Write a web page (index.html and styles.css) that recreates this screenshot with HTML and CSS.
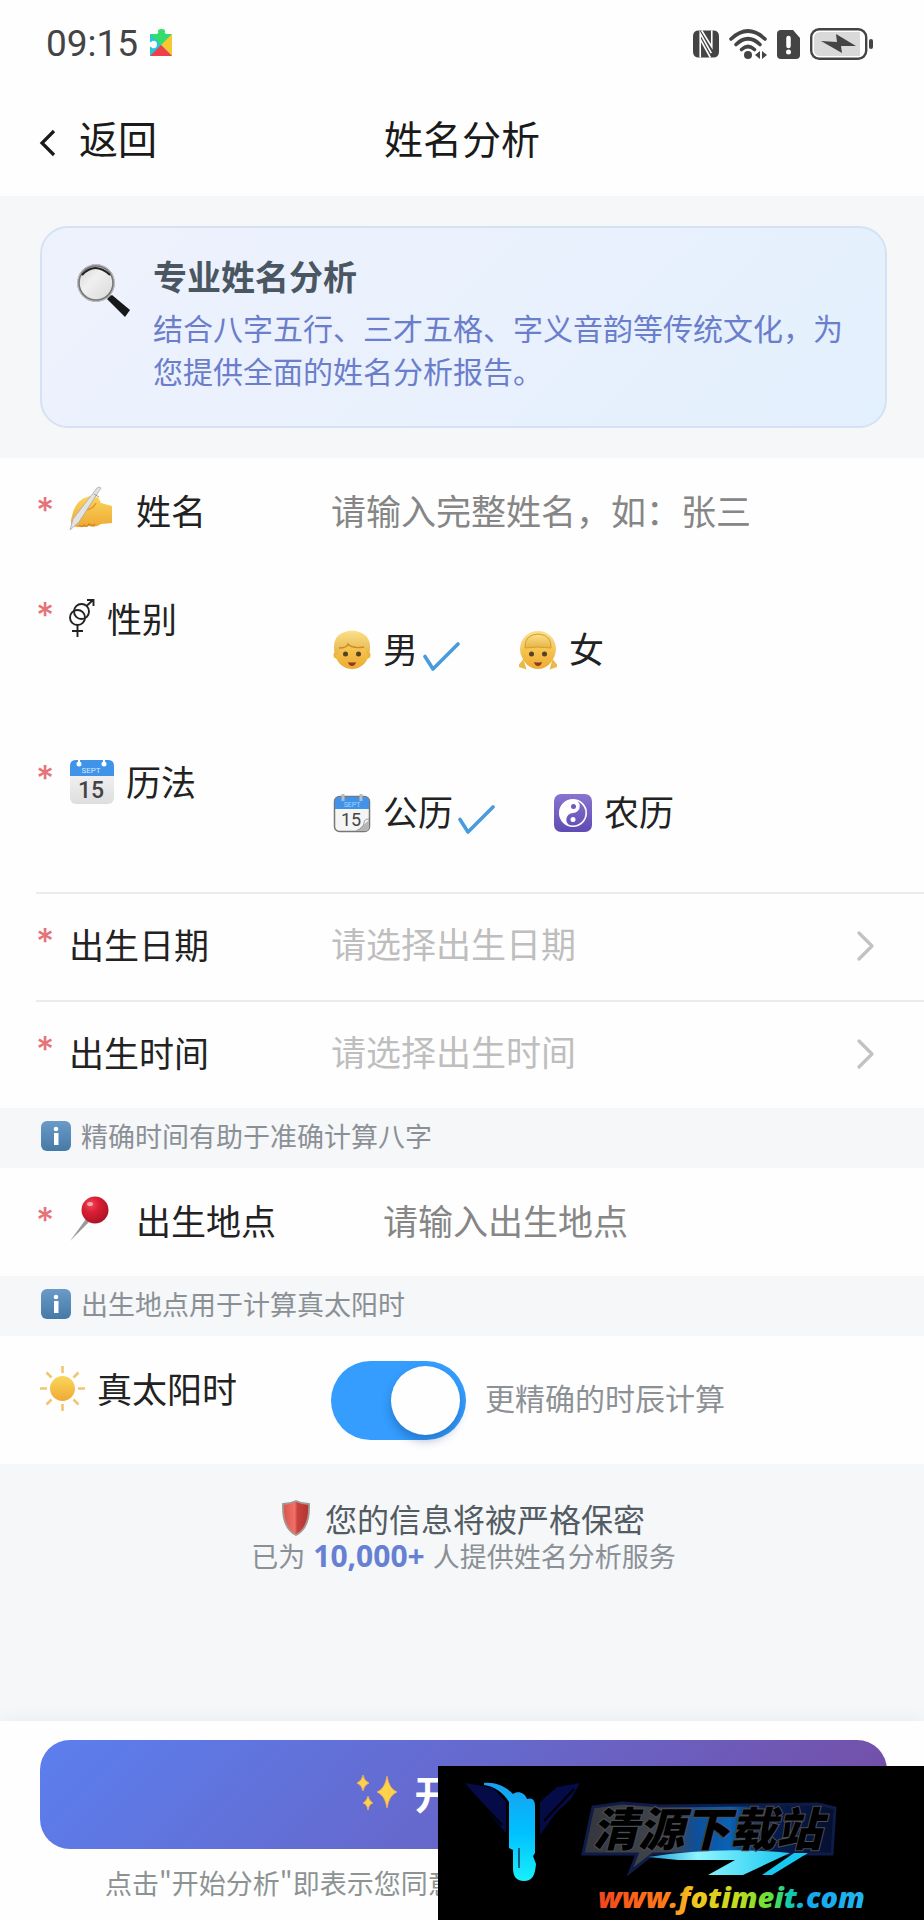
FILE: index.html
```html
<!DOCTYPE html>
<html lang="zh-CN">
<head>
<meta charset="utf-8">
<meta name="viewport" content="width=device-width, initial-scale=1">
<title>姓名分析</title>
<link rel="stylesheet" href="styles.css">
</head>
<body>
<svg class="defs" width="0" height="0" aria-hidden="true">
  <defs>
    <linearGradient id="skin" x1="0" y1="0" x2="0" y2="1"><stop offset="0" stop-color="#fbd65c"/><stop offset="1" stop-color="#eeaa35"/></linearGradient>
    <linearGradient id="hair" x1="0" y1="0" x2="0" y2="1"><stop offset="0" stop-color="#fbe08a"/><stop offset="1" stop-color="#e6b445"/></linearGradient>
    <linearGradient id="paper" x1="0" y1="0" x2="0" y2="1"><stop offset="0" stop-color="#fafafa"/><stop offset="1" stop-color="#dedede"/></linearGradient>
    <linearGradient id="info" x1="0" y1="0" x2="0" y2="1"><stop offset="0" stop-color="#6a9bc9"/><stop offset="1" stop-color="#4579a6"/></linearGradient>
    <symbol id="i-info" viewBox="0 0 30 30">
      <rect width="30" height="30" rx="6" fill="url(#info)"/>
      <circle cx="15" cy="8" r="2.300" fill="#fff"/>
      <path d="M13 12h4.500v12H13z" fill="#fff"/>
    </symbol>
    <symbol id="i-check" viewBox="0 0 38 30">
      <path d="M2 14.500 10 27 35 2" fill="none" stroke="#4a9bdc" stroke-width="3.600" stroke-linecap="round" stroke-linejoin="round"/>
    </symbol>
    <symbol id="i-next" viewBox="0 0 18 30">
      <path d="M2 2 15 15 2 28" fill="none" stroke="#c2c2c2" stroke-width="3.200" stroke-linecap="round" stroke-linejoin="round"/>
    </symbol>
  </defs>
</svg>

<div class="status">
  <span class="status-time">09:15</span>
  <svg class="status-app" viewBox="0 0 24 28" aria-hidden="true">
    <path d="M1 5h22v22H1z" fill="#27c4de"/>
    <path d="M1 5h7q2-1 1-3 0-2 3.500-2T16 2q-1 2 1 3h6L12 16z" fill="#34dc6c"/>
    <path d="M23 5v22L12 16z" fill="#f9c72f"/>
    <path d="M12 16 23 27H1z" fill="#ee3f4b"/>
    <path d="M0 13q2 1 3-1 5-1 5 3.500T3 19q-1-2-3-1z" fill="#fff"/>
  </svg>
  <div class="status-icons">
    <svg width="26" height="28" viewBox="0 0 27 28" aria-hidden="true">
      <path d="M6 0h15q6 0 6 6v16q0 6-6 6H6q-6 0-6-6V6q0-6 6-6z" fill="#444"/>
      <path d="M7.500 28V3L19 23.500M9 0 19.500 17V0M7.500 9 18 28" stroke="#fff" stroke-width="1.700" fill="none"/>
    </svg>
    <svg width="38" height="30" viewBox="0 0 38 30" aria-hidden="true">
      <g fill="none" stroke="#444" stroke-width="3.600" stroke-linecap="round"><path d="M2 10Q19-6 36 10"/><path d="M7 15.500Q19 4 31 15.500"/><path d="M12.500 20.500Q19 14.500 25.500 20.500"/></g>
      <circle cx="19" cy="26" r="4" fill="#444"/>
      <path d="m31 22v8l-5-4zM33 22v8l5-4z" fill="#444"/>
    </svg>
    <svg width="23" height="29" viewBox="0 0 23 29" aria-hidden="true">
      <path d="M4 0h12l7 8v17q0 4-4 4H4q-4 0-4-4V4q0-4 4-4z" fill="#444"/>
      <path d="M11.500 8v8" stroke="#fff" stroke-width="4.500" stroke-linecap="round"/><circle cx="11.500" cy="22" r="2.500" fill="#fff"/>
    </svg>
    <svg width="63" height="32" viewBox="0 0 63 32" aria-hidden="true">
      <rect x="1.200" y="1.200" width="55" height="29.600" rx="8" fill="#fff" stroke="#444" stroke-width="2.400"/>
      <path d="M10 4h40v24H10q-6 0-6-6V10q0-6 6-6z" fill="#d9d9d9"/>
      <path d="M11 13 27 14 26 6 46 18 31 18 32 25z" fill="#444"/>
      <rect x="59" y="11" width="4" height="10" rx="2" fill="#444"/>
    </svg>
  </div>
</div>

<header class="nav">
  <button class="back" type="button">
    <svg class="back-icon" viewBox="0 0 18 30" aria-hidden="true"><path d="M15 3 3 15 15 27" fill="none" stroke="#1a1a1a" stroke-width="3.200"/></svg>
    返回
  </button>
  <h1 class="nav-title">姓名分析</h1>
</header>

<main class="main">
  <section class="intro">
    <svg class="intro-icon" viewBox="0 0 54 54" aria-hidden="true">
      <defs><linearGradient id="lens" x1="0" y1="0" x2="1" y2="1"><stop offset="0" stop-color="#cfcfcf"/><stop offset=".4" stop-color="#f0f0f0"/><stop offset="1" stop-color="#d8d8d8"/></linearGradient></defs>
      <path d="m31 30 6 6" stroke="#9a9a9a" stroke-width="4"/>
      <path d="M31 35 36 31 54 46 49 53z" fill="#16181a"/>
      <circle cx="20" cy="19" r="17.500" fill="url(#lens)" stroke="#777" stroke-width="2.600"/>
      <path d="M6 11Q19-3 34 11" fill="none" stroke="#222" stroke-width="2"/>
      <circle cx="20" cy="19" r="18.300" fill="none" stroke="#d6d6d6" stroke-width=".8"/>
    </svg>
    <div>
      <h2 class="intro-title">专业姓名分析</h2>
      <p class="intro-text">结合八字五行、三才五格、字义音韵等传统文化，为您提供全面的姓名分析报告。</p>
    </div>
  </section>

  <form class="form" id="form">
    <div class="row">
      <label class="label label-wide" for="name">
        <span class="req">*</span>
        <svg class="icon" viewBox="0 0 45 45" aria-hidden="true">
          <path d="M4 26Q8 14 18 11q8-4 12 2l2 4 11 3v17l-11 1q-5 4-12 2l-9 1Q1 42 2 34z" fill="url(#skin)"/>
          <path d="M10 39q3 3 5 0 3 3 5-1 4 3 6 0" fill="none" stroke="#cf8b25" stroke-width="1.500"/>
          <path d="M17 24q7-1 10-7" fill="none" stroke="#dc9a2e" stroke-width="1.500"/>
          <path d="M28 2Q30 0 32 2L10 36 1 44 4 33z" fill="#e3e3e3" stroke="#aaa" stroke-width=".8"/>
          <path d="M25 8 30 11" stroke="#999"/>
        </svg>
        姓名
      </label>
      <input class="text" id="name" type="text" placeholder="请输入完整姓名，如：张三">
    </div>

    <div class="row row-tall" role="radiogroup" aria-labelledby="sex-label">
      <span class="label" id="sex-label">
        <span class="req req-high">*</span>
        <svg class="icon-sex" viewBox="0 0 26 38" aria-hidden="true"><g fill="none" stroke="#222" stroke-width="1.900"><circle cx="8.500" cy="18.500" r="7.500"/><circle cx="12.500" cy="12.500" r="7.500"/><path d="M8.500 26v12M3 32h11M17.500 7 24 1M18 1h6.500v6"/></g></svg>
        性别
      </span>
      <div class="options">
        <label class="option">
          <input class="radio" type="radio" name="sex" checked>
          <svg class="opt-icon" viewBox="0 0 38 40" aria-hidden="true">
            <circle cx="4" cy="25" r="3.500" fill="#eeb13c"/><circle cx="34" cy="25" r="3.500" fill="#eeb13c"/>
            <circle cx="19" cy="22" r="17" fill="url(#skin)"/>
            <path d="M2 25Q-2 8 9 3q10-5 20 0 11 6 7 22l-3-2q0-4-2-6-11 1-15-3-2 4-8 4-2 4-3 7z" fill="url(#hair)"/>
            <path d="M6 18q8 0 9-4 4 5 16 3" fill="none" stroke="#c48c2e" stroke-width="1.300"/>
            <circle cx="12.500" cy="24" r="2.500" fill="#55402b"/><circle cx="25.500" cy="24" r="2.500" fill="#55402b"/>
            <path d="M15 32q4 1 8 0-1 4-4 4t-4-4" fill="#8b3a21"/>
          </svg>
          男
          <svg class="check" aria-hidden="true"><use href="#i-check"/></svg>
        </label>
        <label class="option">
          <input class="radio" type="radio" name="sex">
          <svg class="opt-icon" viewBox="0 0 38 40" aria-hidden="true">
            <path d="M4 31 0 36l6 2zM34 31l4 5-6 2z" fill="#e9b949" stroke="#e9b949" stroke-width="2"/>
            <circle cx="19" cy="19" r="18" fill="url(#hair)"/>
            <circle cx="19" cy="23" r="16" fill="url(#skin)"/>
            <path d="M6 18Q5 5 19 4q14 1 13 14-13-2-26 0" fill="url(#hair)" stroke="#d39c38" stroke-width="1"/>
            <circle cx="12.500" cy="24" r="2.500" fill="#55402b"/><circle cx="25.500" cy="24" r="2.500" fill="#55402b"/>
            <path d="M15 32q4 1 8 0-1 4-4 4t-4-4" fill="#8b3a21"/>
          </svg>
          女
        </label>
      </div>
    </div>

    <div class="row row-tall" role="radiogroup" aria-labelledby="cal-label">
      <span class="label" id="cal-label">
        <span class="req req-high">*</span>
        <svg class="icon" viewBox="0 0 45 45" aria-hidden="true">
          <rect x="1" y="1" width="44" height="44" rx="6" fill="url(#paper)"/>
          <path d="M1 17V7q0-6 6-6h32q6 0 6 6v10z" fill="#3f94e9"/>
          <path d="M10 0v5M35 0v5" stroke="#fff" stroke-width="2"/><circle cx="10" cy="5" r="2.500" fill="#fff"/><circle cx="35" cy="5" r="2.500" fill="#fff"/>
          <text class="cal-month" x="22" y="14" text-anchor="middle">SEPT</text>
          <text class="cal-day" x="22" y="39" text-anchor="middle">15</text>
        </svg>
        历法
      </span>
      <div class="options">
        <label class="option">
          <input class="radio" type="radio" name="calendar" checked>
          <svg class="opt-icon" viewBox="0 0 38 40" aria-hidden="true">
            <rect x="1.500" y="3.500" width="35" height="35" rx="5" fill="#f5f5f5" stroke="#777" stroke-width="1.500"/>
            <path d="M2 16V8q0-4 4-4h26q4 0 4 4v8z" fill="#3f94e9"/>
            <path d="M10 1v7M28 1v7" stroke="#bbb" stroke-width="3"/><path d="M36 27 24 38h8q4 0 4-4z" fill="#b5b5b5"/>
            <path d="M36 26q-5 0-5 4t-8 8" fill="none" stroke="#999" stroke-width="1"/>
            <text class="cal-month-s" x="19" y="14" text-anchor="middle">SEPT</text>
            <text class="cal-day-s" x="18" y="33" text-anchor="middle">15</text>
          </svg>
          公历
          <svg class="check" aria-hidden="true"><use href="#i-check"/></svg>
        </label>
        <label class="option">
          <input class="radio" type="radio" name="calendar">
          <svg class="opt-icon" viewBox="0 0 38 40" aria-hidden="true">
            <defs><linearGradient id="yy" x1="0" y1="0" x2="0" y2="1"><stop offset="0" stop-color="#8a74cf"/><stop offset="1" stop-color="#5e4bb4"/></linearGradient></defs>
            <rect y="1" width="38" height="38" rx="7" fill="url(#yy)"/>
            <circle cx="19" cy="20" r="13.200" fill="none" stroke="#fff" stroke-width="1.600"/>
            <path d="M19 6.500A6.750 6.750 0 0 1 19 20a6.750 6.750 0 0 0 0 13.500A13.500 13.500 0 0 1 19 6.500" fill="#fff"/>
            <circle cx="19.500" cy="13.500" r="2.500" fill="#6f5bc0"/><circle cx="19" cy="26.500" r="2.500" fill="#fff"/>
          </svg>
          农历
        </label>
      </div>
    </div>

    <div class="row row-line">
      <span class="label" id="date-label"><span class="req req-high">*</span>出生日期</span>
      <button class="picker" type="button" aria-labelledby="date-label date-value"><span class="picker-value" id="date-value">请选择出生日期</span><svg class="next" aria-hidden="true"><use href="#i-next"/></svg></button>
    </div>
    <div class="row row-line">
      <span class="label" id="time-label"><span class="req req-high">*</span>出生时间</span>
      <button class="picker" type="button" aria-labelledby="time-label time-value"><span class="picker-value" id="time-value">请选择出生时间</span><svg class="next" aria-hidden="true"><use href="#i-next"/></svg></button>
    </div>

    <p class="hint"><svg class="info" aria-hidden="true"><use href="#i-info"/></svg>精确时间有助于准确计算八字</p>

    <div class="row row-place">
      <label class="label label-wide" for="place">
        <span class="req">*</span>
        <svg class="icon" viewBox="0 0 45 45" aria-hidden="true">
          <defs><radialGradient id="ball" cx=".35" cy=".3" r=".75"><stop offset="0" stop-color="#f0485a"/><stop offset=".4" stop-color="#da1f33"/><stop offset="1" stop-color="#a91225"/></radialGradient></defs>
          <path d="M17 23 20 26 1 45z" fill="#9a9a9a"/><circle cx="26" cy="14" r="13.500" fill="url(#ball)"/>
          <ellipse cx="21" cy="8" rx="3" ry="2" fill="#f7a5ad"/>
        </svg>
        出生地点
      </label>
      <input class="text" id="place" type="text" placeholder="请输入出生地点">
    </div>

    <p class="hint"><svg class="info" aria-hidden="true"><use href="#i-info"/></svg>出生地点用于计算真太阳时</p>

    <div class="row row-sun">
      <label class="label label-sun" for="solar">
        <svg class="icon" viewBox="0 0 45 45" aria-hidden="true">
          <g stroke="#f0c574" stroke-width="2.600"><path d="M22.500 0v7M22.500 38v7M0 22.500h7M38 22.500h7M6.500 6.500l5 5M33.500 33.500l5 5M6.500 38.500l5-5M33.500 11.500l5-5"/></g>
          <circle cx="22.500" cy="22.500" r="12.500" fill="url(#skin)"/>
        </svg>
        真太阳时
      </label>
      <input class="switch" id="solar" type="checkbox" role="switch" checked>
      <span class="switch-note">更精确的时辰计算</span>
    </div>
  </form>

  <section class="trust">
    <p class="trust-main">
      <svg class="shield" viewBox="0 0 28 36" aria-hidden="true">
        <defs><linearGradient id="sh" x1="0" y1="0" x2="1" y2="0"><stop offset="0" stop-color="#d9534d"/><stop offset=".45" stop-color="#ef7067"/><stop offset=".55" stop-color="#c9423d"/><stop offset="1" stop-color="#b23331"/></linearGradient></defs>
        <path d="M1 4Q8 4 14 1q6 3 13 3 1 24-13 31Q0 28 1 4z" fill="url(#sh)" stroke="#a79792" stroke-width="1.800"/>
      </svg>
      您的信息将被严格保密
    </p>
    <p class="trust-sub">已为 <strong class="count">10,000+</strong> 人提供姓名分析服务</p>
  </section>
</main>

<footer class="footer">
  <button class="submit" type="submit" form="form">
    <svg class="sparkle" viewBox="0 0 42 36" aria-hidden="true"><g fill="#ffd24a" stroke="#f0ae5a" stroke-width=".8"><path d="M31 2q2 13 10 16-8 3-10 16-2-13-10-16 8-3 10-16z"/><path d="M7 1q1 6 6 8-5 2-6 8-1-6-6-8 5-2 6-8zM12 22q1 5 5 7-4 1-5 7-1-6-5-7 4-2 5-7z"/></g></svg>
    开始分析
  </button>
  <p class="terms">点击"开始分析"即表示您同意</p>
</footer>

<div class="mark">
  <svg class="mark-art" viewBox="0 0 486 154" role="img" aria-label="清源下载站">
    <defs>
      <linearGradient id="cy" x1="0" y1="0" x2="0" y2="1"><stop offset="0" stop-color="#18a0f0"/><stop offset=".5" stop-color="#00c0ff"/><stop offset="1" stop-color="#18f0fa"/></linearGradient>
      <linearGradient id="plate" x1="0" y1="0" x2="1" y2="0"><stop offset="0" stop-color="#34373d"/><stop offset=".35" stop-color="#41464e"/><stop offset=".45" stop-color="#0d4f9a"/><stop offset=".58" stop-color="#0a62b4"/><stop offset=".72" stop-color="#071d52"/><stop offset="1" stop-color="#05102e"/></linearGradient>
      <linearGradient id="glow" x1="0" y1="0" x2="1" y2="0"><stop offset="0" stop-color="#1596d8"/><stop offset=".35" stop-color="#8ff4ff"/><stop offset="1" stop-color="#18c8f0"/></linearGradient>
      <linearGradient id="rain" x1="0" y1="0" x2="1" y2="0"><stop offset="0" stop-color="#f4431c"/><stop offset=".25" stop-color="#ff7a1c"/><stop offset=".36" stop-color="#f4c51e"/><stop offset=".52" stop-color="#c4dc1e"/><stop offset=".65" stop-color="#5ee03c"/><stop offset=".72" stop-color="#12c8b0"/><stop offset=".78" stop-color="#12a8ee"/><stop offset="1" stop-color="#22b4f2"/></linearGradient>
    </defs>
    <path d="M27 17 55 22 68 36V67L55 52 46 40z" fill="#050b46"/><path d="M31 24 64 59" stroke="#000" stroke-width="2"/>
    <path d="M142 17 119 21 102 36V69L118 47 133 33z" fill="#050b46"/><path d="M136 23 106 55" stroke="#000" stroke-width="2"/>
    <path d="M46 17C58 16 68 21 75 28 80 24 87 27 89 33 94 31 97 34 97 40V87L95 90 98 98C97 110 94 115 86 115 78 115 75 110 75 102V84L71 82V36C66 27 56 20 46 19z" fill="url(#cy)"/>
    <path d="M81 82v20" stroke="#04305a" stroke-width="1.500"/>
    <path d="M155 41 184 37 222 40 380 38 397 42 394 88H215L192 106 199 88H145z" fill="url(#plate)" stroke="#101c48" stroke-width="3"/>
    <path d="M210 91Q280 80 352 87L305 109H270L297 94H240z" fill="url(#glow)"/>
    <path d="M356 87h14L334 109H324z" fill="#18c8f0"/>
    <text class="mark-name" x="154" y="80">清源下载站</text>
    <text class="mark-url" x="160" y="142" fill="url(#rain)">www.fotimeit.com</text>
  </svg>
</div>
</body>
</html>
```

FILE: styles.css
```css
* { box-sizing: border-box; }

body {
  margin: 0;
  min-height: 100vh;
  position: relative;
  display: flex;
  flex-direction: column;
  background: #f5f7f8;
  color: #222;
  font-family: "Noto Sans CJK SC", "Noto Sans", sans-serif;
  font-size: 35px;
  line-height: 48px;
}

h1, h2, p { margin: 0; }

button, input {
  margin: 0;
  padding: 0;
  border: 0;
  background: none;
  color: inherit;
  font: inherit;
}

svg { flex: none; }

.defs { position: absolute; }

.status {
  display: flex;
  align-items: center;
  height: 88px;
  padding: 0 51px 0 46px;
  background: #fefefe;
}

.status-time {
  color: #444;
  font-family: Roboto, sans-serif;
  font-size: 37px;
}

.status-app {
  width: 24px;
  height: 28px;
  margin: 0 0 2px 11px;
}

.status-icons {
  display: flex;
  align-items: center;
  gap: 10px;
  margin-left: auto;
}

.nav {
  display: grid;
  grid-template-columns: 1fr auto 1fr;
  align-items: center;
  height: 108px;
  padding: 0 39px 10px;
  background: #fefefe;
  color: #1a1a1a;
  font-size: 39px;
}

.back {
  display: flex;
  align-items: center;
  justify-self: start;
  gap: 22px;
}

.back-icon {
  width: 18px;
  height: 30px;
  margin-top: 12px;
}

.nav-title {
  font-size: 39px;
  font-weight: 400;
}

.main { flex: 1; }

.intro {
  display: flex;
  gap: 23px;
  margin: 30px 37px 30px 40px;
  padding: 24px 28px 34px 34px;
  border: 2px solid #d5e2f3;
  border-radius: 28px;
  background: linear-gradient(135deg, #eef2fd, #e9f1fd 50%, #e3f0fd);
}

.intro-icon {
  width: 54px;
  height: 54px;
  margin-top: 12px;
}

.intro-title {
  color: #4a5661;
  font-size: 34px;
  font-weight: 700;
}

.intro-text {
  margin-top: 6px;
  color: #6b7ecb;
  font-size: 30px;
  line-height: 43px;
}

.row {
  display: flex;
  align-items: center;
  min-height: 108px;
  padding: 0 37px 0 36px;
  background: #fefefe;
}

.row-tall { min-height: 163px; }

.row-line { position: relative; }

.row-line::before {
  content: "";
  position: absolute;
  top: 0;
  right: 0;
  left: 36px;
  border-top: 2px solid #ebebeb;
}

.label {
  display: flex;
  align-items: center;
  align-self: flex-start;
  flex: none;
  gap: 12px;
  width: 295px;
  height: 104px;
}

.label-wide { gap: 22px; }

.label > .icon,
.icon-sex { margin-left: -12px; }

.label-wide > .icon {
  margin: 0 0 4px -22px;
}

.req {
  width: 33px;
  color: #e57378;
  font-family: Inter, sans-serif;
  font-weight: 500;
}

.req-high { margin-bottom: 6px; }

.row-line .label { gap: 0; }

.icon {
  width: 45px;
  height: 45px;
}

.icon-sex {
  width: 26px;
  height: 38px;
}

.cal-month,
.cal-day,
.cal-month-s,
.cal-day-s { font-family: Roboto, sans-serif; }

.cal-month { fill: #d5e8fc; font-size: 8px; }
.cal-day { fill: #444; font-size: 23px; font-weight: 500; }
.cal-month-s { fill: #a9d0f8; font-size: 7px; }
.cal-day-s { fill: #444; font-size: 18px; }

.text {
  flex: 1;
  min-width: 0;
  height: 104px;
  padding-bottom: 6px;
  outline: 0;
}

.text::placeholder {
  color: #868686;
  opacity: 1;
}

.options {
  display: flex;
  gap: 56px;
}

.option {
  position: relative;
  display: flex;
  align-items: center;
}

.radio {
  position: absolute;
  opacity: 0;
}

.opt-icon {
  width: 38px;
  height: 40px;
  margin: 4px 12px 0 2px;
}

.check {
  width: 38px;
  height: 30px;
  margin: 18px 0 0 5px;
}

.picker {
  display: flex;
  align-items: center;
  justify-content: space-between;
  flex: 1;
  height: 106px;
  padding-right: 12px;
  color: #bebebe;
}

.picker-value { padding-bottom: 6px; }

.next {
  width: 18px;
  height: 30px;
}

.hint {
  display: flex;
  align-items: center;
  gap: 10px;
  height: 60px;
  padding: 0 41px 4px;
  color: #8b9097;
  font-size: 27px;
}

.info {
  width: 30px;
  height: 30px;
}

.row-place .label { width: 347px; }

.row-sun {
  min-height: 128px;
  padding-left: 40px;
}

.label-sun { width: 291px; }
.label-sun > .icon { margin-left: 0; }

.switch {
  appearance: none;
  flex: none;
  width: 135px;
  height: 79px;
  padding: 5px;
  border-radius: 40px;
  background: #b8bcc2;
}

.switch::before {
  content: "";
  display: block;
  width: 69px;
  height: 69px;
  border-radius: 50%;
  background: #fefefe;
  box-shadow: 0 6px 10px rgba(0, 40, 110, 0.3);
}

.switch:checked {
  padding-left: 60px;
  background: #349dfd;
}

.switch-note {
  margin-left: 19px;
  padding-bottom: 6px;
  color: #8d9196;
  font-size: 30px;
}

.trust {
  display: flex;
  flex-direction: column;
  align-items: center;
  padding: 34px 37px 34px 40px;
}

.trust-main {
  display: flex;
  align-items: center;
  gap: 15px;
  color: #535b63;
  font-size: 32px;
  line-height: 40px;
}

.shield {
  width: 28px;
  height: 36px;
}

.trust-sub {
  color: #8b9096;
  font-size: 27px;
  line-height: 36px;
}

.count {
  margin: 0 2px;
  color: #6680d4;
  font-family: "Noto Sans", sans-serif;
  font-size: 30px;
}

.footer {
  padding: 19px 37px 17px 40px;
  background: #fefefe;
  box-shadow: 0 -4px 16px rgba(0, 0, 0, 0.04);
}

.submit {
  display: flex;
  align-items: center;
  justify-content: center;
  gap: 16px;
  width: 100%;
  height: 109px;
  padding-bottom: 6px;
  border-radius: 30px;
  background: linear-gradient(135deg, #5b7fee, #6668cc 50%, #764ba2);
  color: #fff;
  font-size: 39px;
  font-weight: 700;
}

.sparkle {
  width: 42px;
  height: 36px;
}

.terms {
  padding: 14px 0 0 65px;
  color: #8d9393;
  font-size: 27px;
  line-height: 40px;
}

.mark {
  position: absolute;
  right: 0;
  bottom: 0;
  width: 486px;
  background: #000;
}

.mark-art { display: block; }

.mark-name {
  fill: #000;
  stroke: #4b4e55;
  stroke-width: 2px;
  paint-order: stroke;
  font-size: 46px;
  font-style: italic;
  font-weight: 900;
}

.mark-url {
  font-family: "Open Sans", sans-serif;
  font-size: 29px;
  font-style: italic;
  font-weight: 800;
}
```
